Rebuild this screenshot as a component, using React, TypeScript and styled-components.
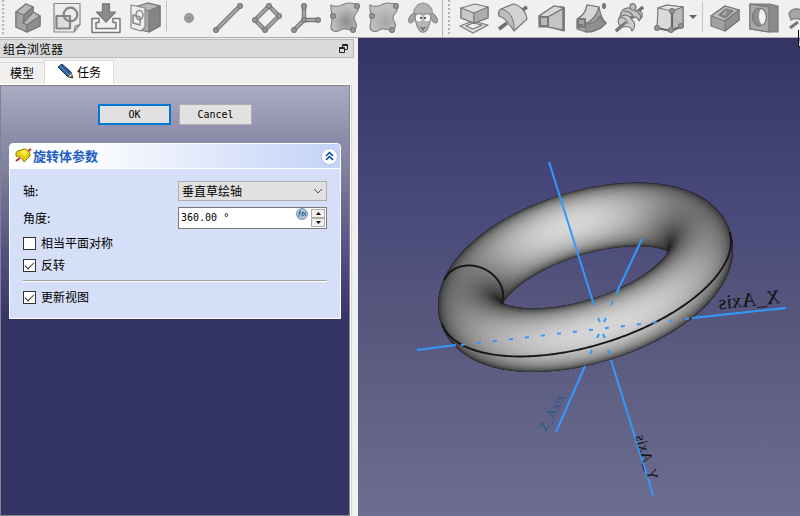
import React, { useState } from "react";
import styled, { createGlobalStyle } from "styled-components";

const cjk = '"Noto Sans CJK SC", sans-serif';
const mono = '"DejaVu Sans Mono", "Noto Sans CJK SC", monospace';

const GlobalStyle = createGlobalStyle`
  *, *::before, *::after { box-sizing: border-box; }
  body { margin: 0; background: #f0f0f0; }
`;

const Window = styled.div`
  display: flex;
  flex-direction: column;
  min-height: 100vh;
  overflow: hidden;
  background: #f0f0f0;
  color: #000;
  font: 12px/16px ${cjk};
`;

const ToolArea = styled.header`
  display: flex;
  flex: none;
  height: 38px;
  overflow: hidden;
  border-bottom: 1px solid #adadad;
`;

const ToolBar = styled.div<{ $grow?: boolean }>`
  display: flex;
  align-items: flex-start;
  flex: ${(p) => (p.$grow ? "1 1 0" : "none")};
  min-width: 0;
  height: 37px;
  padding-left: ${(p) => (p.$grow ? 3 : 0)}px;
  overflow: hidden;
  border-right: ${(p) => (p.$grow ? "none" : "1px solid #b4b4b4")};
`;

const Grip = styled.span`
  flex: none;
  width: 2px;
  height: 34px;
  margin: 0 4px 0 2px;
  background: repeating-linear-gradient(#b4b4b4 0 2px, transparent 2px 4px);
`;

const Divider = styled.span<{ $gap?: number }>`
  flex: none;
  width: 1px;
  height: 31px;
  margin: 1px 2px 0 ${(p) => p.$gap ?? 2}px;
  background: #c4c4c4;
`;

const ToolButton = styled.button`
  flex: none;
  width: 39px;
  height: 34px;
  padding: 2px 4px 0 5px;
  border: 0;
  background: none;
  svg { display: block; width: 30px; height: 30px; overflow: visible; }
`;

const MenuArrow = styled.button`
  flex: none;
  width: 10px;
  height: 34px;
  padding: 0 1px;
  border: 0;
  background: none;
  svg { display: block; }
`;

const Main = styled.main`
  display: flex;
  flex: 1;
  min-height: 0;
`;

const Dock = styled.aside`
  display: flex;
  flex-direction: column;
  flex: none;
  width: 358px;
  padding: 1px 4px 0 0;
`;

const DockTitle = styled.div`
  display: flex;
  align-items: center;
  justify-content: space-between;
  height: 19px;
  padding: 0 5px 0 3px;
  border: 1px solid #b9b9b9;
  border-left: 0;
  background: #dadada;
`;

const FloatButton = styled.button`
  display: flex;
  padding: 0;
  border: 0;
  background: none;
`;

const Tabs = styled.div`
  display: flex;
  align-items: flex-end;
  height: 27px;
  border-bottom: 1px solid #fff;
`;

const Tab = styled.button<{ $active?: boolean }>`
  display: flex;
  align-items: center;
  gap: 3px;
  height: ${(p) => (p.$active ? 24 : 22)}px;
  padding: 0 ${(p) => (p.$active ? 12 : 10)}px 2px;
  border: 1px solid #d9d9d9;
  border-bottom: 0;
  border-left-width: ${(p) => (p.$active ? 1 : 0)}px;
  border-right-width: ${(p) => (p.$active ? 1 : 0)}px;
  background: ${(p) => (p.$active ? "#fff" : "#f0f0f0")};
  font: 12px/16px ${cjk};
  color: #000;
`;

const TaskPanel = styled.section`
  display: flex;
  flex-direction: column;
  flex: 1;
  gap: 18px;
  margin-right: 4px;
  padding: 18px 8px 0;
  border: 1px solid #82828c;
  box-shadow: 1px 0 #fff, 2px 0 #d5d5d5;
  background: linear-gradient(#aaaac2 0, #8e8eab 50px, #7c7c9e 90px, #505081 170px, #343465 235px);
`;

const Actions = styled.div`
  display: flex;
  justify-content: center;
  gap: 8px;
`;

const PushButton = styled.button<{ $primary?: boolean }>`
  width: 73px;
  height: 21px;
  padding: 0;
  border: ${(p) => (p.$primary ? "2px solid #0078d7" : "1px solid #adadad")};
  background: #e1e1e1;
  font: 10px/16px ${mono};
  color: #000;
`;

const Group = styled.section`
  border: 1px solid #fff;
  border-radius: 4px 4px 0 0;
  overflow: hidden;
  background: #d5dff7;
`;

const GroupHeader = styled.header`
  display: flex;
  align-items: center;
  gap: 1px;
  height: 25px;
  padding: 0 2px 0 5px;
  border-bottom: 1px solid #fff;
  background: linear-gradient(90deg, #fff 0, #fbfcff 25%, #c6d4f7 95%);
`;

const GroupTitle = styled.h2`
  flex: 1;
  margin: 0;
  font: bold 13px/16px ${cjk};
  color: #215dc6;
`;

const Collapse = styled.button`
  display: flex;
  align-items: center;
  justify-content: center;
  width: 17px;
  height: 17px;
  padding: 0;
  border: 1px solid #b3bfe0;
  border-radius: 50%;
  background: #fff;
`;

const Form = styled.form`
  display: flex;
  flex-direction: column;
  padding: 6px 13px 14px;
`;

const Field = styled.div<{ $height: number }>`
  display: grid;
  grid-template-columns: 155px minmax(0, 1fr);
  grid-template-rows: 100%;
  align-items: center;
  height: ${(p) => p.$height}px;
  margin-top: 6px;
`;

const Control = styled.div`
  position: relative;
  display: flex;
  height: 100%;
`;

const Select = styled.select`
  appearance: none;
  width: 100%;
  padding: 0 20px 0 3px;
  border: 1px solid #adadad;
  border-radius: 0;
  background: #e1e1e1;
  font: 12px/16px ${cjk};
  color: #000;
`;

const SelectArrow = styled.svg`
  position: absolute;
  top: 7px;
  right: 4px;
  pointer-events: none;
`;

const SpinBox = styled.div`
  display: flex;
  height: 100%;
  border: 1px solid #7a7a7a;
  background: #fff;
`;

const SpinInput = styled.input`
  flex: 1;
  min-width: 0;
  padding: 0 2px;
  border: 0;
  outline: 0;
  background: none;
  font: 10px/16px ${mono};
  color: #000;
`;

const Steps = styled.div`
  display: flex;
  flex-direction: column;
  flex: none;
  width: 14px;
  margin: 1px 1px 1px 3px;
`;

const Step = styled.button`
  display: flex;
  align-items: center;
  justify-content: center;
  flex: 1;
  padding: 0;
  border: 1px solid #adadad;
  background: #f0f0f0;
`;

const Checks = styled.div`
  display: flex;
  flex-direction: column;
  gap: 8px;
  margin-top: 7px;
`;

const Check = styled.label`
  display: flex;
  align-items: center;
  gap: 5px;
  height: 14px;
`;

const CheckInput = styled.input`
  appearance: none;
  width: 13px;
  height: 13px;
  margin: 0;
  border: 1px solid #333;
  background: #fff;
  &:checked::before {
    content: "";
    display: block;
    width: 9px;
    height: 5px;
    margin: 2px 0 0 1px;
    border: solid #333;
    border-width: 0 0 1px 1px;
    transform: rotate(-45deg);
  }
`;

const Rule = styled.hr`
  width: 100%;
  height: 2px;
  margin: 0;
  border: solid;
  border-width: 1px 0;
  border-color: #a0a0a0 transparent #fff;
`;

const Viewport = styled.section`
  position: relative;
  display: flex;
  flex: 1;
  min-width: 0;
  background: linear-gradient(#343465 0, #393969 8%, #48487a 34%, #56567d 58%, #626286 78%, #6d6d92 100%);
`;

const Scene = styled.svg`
  display: block;
  width: 100%;
  aspect-ratio: 442 / 478;
  align-self: flex-start;
`;

const Pointer = styled.svg`
  position: absolute;
  top: -8px;
  right: 0;
`;

/* ---------- toolbar icons ---------- */

const dark = "#787878";
const mid = "#a0a0a0";

const Icon = ({ children }: { children: React.ReactNode }) => (
  <svg viewBox="0 0 30 30" fill={mid} stroke={dark} strokeWidth="1.2" strokeLinejoin="round" aria-hidden="true">
    {children}
  </svg>
);

const Dot = ({ x, y }: { x: number; y: number }) => <circle cx={x} cy={y} r="2.4" fill="#999" />;

const Pipe = ({ d, close }: { d: string; close?: boolean }) => (
  <g fill="none" strokeLinecap={close ? "butt" : "round"}>
    <path d={d} strokeWidth="4.4" />
    <path d={d} strokeWidth="2" stroke="#a8a8a8" />
  </g>
);

const BodyIcon = () => (
  <Icon>
    <path d="M3 9 13 1l7 3v5l7 4v10l-13 6-11-5z" fill={mid} />
    <path d="M3 9 13 1l7 3-9 8z" fill="#b8b8b8" />
    <path d="m10 20 10-11 7 4-13 9z" fill="#b8b8b8" />
    <path d="m11 12 9-8v5L10 20z" fill="#8b8b8b" />
    <path d="M3 9l8 3-1 8 4 2v7L3 24z" fill="#a2a2a2" />
    <path d="m14 22 13-9v10l-13 6z" fill="#8e8e8e" />
  </Icon>
);

const SketchIcon = () => (
  <Icon>
    <path d="M2 .5h26v21L22 29H2z" fill="#ececec" stroke="#888" />
    <path d="M28 21.500 22 29l1-6z" fill="#c4c4c4" stroke="#888" />
    <g fill="none" stroke="#858585" strokeWidth="2.200">
      <path d="M4.500 13h13.500v12.500H4.500z" fill="#bbb" fillOpacity=".3" />
      <circle cx="18.500" cy="11.500" r="6.800" />
    </g>
  </Icon>
);

const ExportIcon = () => (
  <Icon>
    <path d="M1 15.500h7v4H5v6h20v-6h-3v-4h7v14H1z" fill="#f6f6f6" strokeWidth="1.500" />
    <path d="M11.500.8h7V9h6L15 19 5.500 9h6z" fill="#8c8c8c" />
  </Icon>
);

const MapIcon = () => (
  <Icon>
    <path d="m5 4 13-4 12 3v20l-11 6-14-3z" fill="#a8a8a8" />
    <path d="m5 4 13-4 12 3-11 5z" fill="#b8b8b8" />
    <path d="m19 8 11-5v20l-11 6z" fill="#858585" />
    <path d="m1 2 14 3v19l-4 4-10-3z" fill="#eee" stroke="#888" />
    <path d="m3 12 7 2v8l-7-2z" fill="none" stroke="#888" strokeWidth="1.500" />
    <ellipse cx="9.500" cy="12" rx="3.500" ry="4.500" fill="none" stroke="#888" strokeWidth="1.500" />
  </Icon>
);

const PointIcon = () => (
  <Icon>
    <circle cx="15" cy="15" r="4.300" fill="#a0a0a0" stroke="#8f8f8f" strokeWidth="1.200" />
    <circle cx="15" cy="15" r="2" fill="#929292" stroke="none" />
  </Icon>
);

const LineIcon = () => (
  <Icon>
    <Pipe d="M3 27 27 3" />
    <Dot x={3} y={27} />
    <Dot x={27} y={3} />
  </Icon>
);

const PlaneIcon = () => (
  <Icon>
    <Pipe d="M17 3 27 13 13 27 3 17z" close />
    <Dot x={17} y={3} />
    <Dot x={27} y={13} />
    <Dot x={13} y={27} />
    <Dot x={3} y={17} />
  </Icon>
);

const AxesIcon = () => (
  <Icon>
    <Pipe d="M13 3v14h14M13 17 3 27" />
    <Dot x={13} y={3} />
    <Dot x={13} y={17} />
    <Dot x={27} y={17} />
    <Dot x={3} y={27} />
  </Icon>
);

const BinderIcon = ({ soft }: { soft?: boolean }) => {
  const id = soft ? "surf-soft" : "surf-solid";
  return (
    <Icon>
      <radialGradient id={id} cx=".55" cy=".65">
        <stop offset="0" stopColor={soft ? "#a6a6a6" : "#8c8c8c"} />
        <stop offset="1" stopColor="#c0c0c0" />
      </radialGradient>
      <path
        d="M1 2c4 2 7 2 11 0 5-3 9-2 14-1 4 1 3 5 1 8-3 4-4 6-2 9 3 5 1 9-3 9-4 0-7-3-12 0-4 3-9 1-9-3 1-4 1-7 1-11S0 5 1 2z"
        fill={`url(#${id})`}
        stroke="#858585"
      />
      <Dot x={27} y={3} />
      <Dot x={3} y={13} />
      <Dot x={23} y={27} />
    </Icon>
  );
};

const SheepIcon = () => (
  <Icon>
    <path d="M7 9C4 11-1 16 1 19c2 3 6-2 7-6M23 9c3 2 8 7 6 10-2 3-6-2-7-6" fill="#a5a5a5" stroke="#8a8a8a" />
    <path d="M7 12c0 8 2 11 4 15 2 3 6 3 8 0 2-4 4-7 4-15L19 6h-8z" fill="#b5b5b5" stroke="#8a8a8a" />
    <path d="M6 10C5 5 9 4 9 3c1-3 5-2 6-3 2 1 5 0 6 3 1 1 4 2 3 7-3 2-5-1-8 1-4-2-7 1-10-1z" fill="#b4b4b4" stroke="#999" />
    <g fill="#fff" stroke="none">
      <circle cx="11" cy="15" r="3.200" />
      <circle cx="19" cy="15" r="3.200" />
    </g>
    <g fill="#555" stroke="none">
      <circle cx="13" cy="15" r="1.200" />
      <circle cx="17" cy="15" r="1.200" />
    </g>
    <path d="m12.500 24 2.500 2 2.500-2M15 26v2" fill="none" stroke="#666" />
  </Icon>
);

const PadIcon = () => (
  <Icon>
    <path d="m1 23 13-5 15 4-15 8zm6 0 7 3 9-4-9-2z" fill="#dcdcdc" fillRule="evenodd" />
    <path d="m2 5 14-4 13 3v11l-14 5-13-5z" fill="#e0e0e0" />
    <path d="m2 5 13 5v10L2 15z" fill="#c8c8c8" />
    <path d="m15 10 14-6v11l-14 5z" fill="#adadad" />
  </Icon>
);

const RevolveIcon = () => (
  <Icon>
    <path d="m1 26 8-6M23 8l6-4" stroke="#707070" strokeWidth="3.500" />
    <path d="M1 13C0 9 1 7 3 6l12-5c7 1 13 7 14 15L16 28c-2-3-3-5-5-7-3-4-6-7-10-8z" fill="#d2d2d2" />
    <path d="M3 6c8 1 14 9 13 22-2-3-3-5-5-7-3-4-6-7-10-8 0-4 0-6 2-7z" fill="#bdbdbd" strokeWidth="1" />
  </Icon>
);

const LoftIcon = () => (
  <Icon>
    <path d="M2 13 17 3l10 1v24L11 24H2z" fill="#a8a8a8" />
    <path d="M2 13 17 3l10 2-16 9z" fill="#d8d8d8" />
    <path d="m11 14 16-9v22l-16-3z" fill="#c4c4c4" />
    <path d="M26.500 4v24" strokeWidth="2.500" />
    <path d="M3 14h8v9H3z" fill="#b8b8b8" strokeWidth="2" />
  </Icon>
);

const SweepIcon = () => (
  <Icon>
    <path d="M1 16C6 13 10 9 11 2l12 2c1 6 3 12 7 16-6 7-14 9-20 9l-9-3z" fill="#a2a2a2" />
    <path d="M3 15C8 12 10 8 11 2l12 2c-2 8-7 14-14 17z" fill="#d6d6d6" />
    <path d="m9 21c7 0 12-3 15-8 1 3 3 5 6 7-6 7-14 9-20 9z" fill="#8f8f8f" />
    <path d="M2 16h7v8H2zM1 22h6" fill="#a3a3a3" strokeWidth="2.200" />
    <ellipse cx="28" cy="3" rx="1.500" ry="2.500" fill="#777" />
  </Icon>
);

const HelixIcon = () => (
  <Icon>
    <path d="M1 28 28 4" strokeWidth="3.500" stroke="#6e6e6e" />
    <path d="M15 2c5-4 7 2 5 5 8 0 9 6 5 9 0-4-4-6-9-4z" fill="#bcbcbc" />
    <path d="M5 14c1-9 9-11 12-7 7 1 11 6 7 11-1-5-8-5-10-3-4-2-7-2-9-1z" fill="#c2c2c2" />
    <path d="M4 15c4-5 11-3 13 2 3 2 4 7 0 11-1-5-5-5-9-4-4-1-6-5-4-9z" fill="#cdcdcd" />
    <path d="M4 15c5-1 8 1 9 6M9 8c6 0 9 3 10 8" fill="none" />
    <path d="m1 28 10-9" strokeWidth="2.500" stroke="#777" />
  </Icon>
);

const PrimitiveIcon = () => (
  <Icon>
    <path d="m4 5 9-3 16 2v18l-12 6-14-3z" fill="#dadada" />
    <path d="m4 5 14 3 11-4-16-2z" fill="#e6e6e6" />
    <path d="m18 8 11-4v19l-11 5z" fill="#bababa" />
    <path d="M3 25 17 28 28 23M18 28V8" fill="none" stroke="#686868" strokeWidth="2.200" />
    <Dot x={3} y={25} />
    <Dot x={17} y={27} />
    <Dot x={27} y={23} />
    <Dot x={18} y={8} />
  </Icon>
);

const PocketIcon = () => (
  <Icon>
    <path d="M1 13 15 3l14 4v10L15 28 1 23z" fill="#a2a2a2" />
    <path d="M1 13 15 3l14 4-14 11z" fill="#bdbdbd" />
    <path d="m15 18 14-11v10L15 28z" fill="#909090" />
    <path d="m9 12 7-6 7 2-8 7z" fill="#8a8a8a" />
    <path d="m12 12 4-5v5z" fill="#b0b0b0" stroke="none" />
  </Icon>
);

const HoleIcon = () => (
  <Icon>
    <path d="M1 1h19l9 2v26h-9L1 26z" fill="#8b8b8b" />
    <path d="m1 1 19 3v25L1 26z" fill="#a8a8a8" />
    <ellipse cx="10.500" cy="14" rx="7" ry="8.800" fill="#8f8f8f" />
    <path d="M12 6c6 2 6 13 1 16-4-5-4-11-1-16z" fill="#f0f0f0" stroke="none" />
  </Icon>
);

const GrooveIcon = () => (
  <Icon>
    <path d="m2 25 8-6" strokeWidth="3" />
    <path d="M1 11C3 5 9 5 14 7l14 5-10 15c0-9-8-14-15-10z" fill="#a6a6a6" />
  </Icon>
);

type Tool = [string, () => React.ReactElement];

const startTools: Tool[] = [
  ["实体", BodyIcon],
  ["草图", SketchIcon],
  ["编辑草图", ExportIcon],
  ["映射草图", MapIcon],
];
const modelTools: Tool[] = [
  ["点", PointIcon],
  ["线", LineIcon],
  ["面", PlaneIcon],
  ["坐标系", AxesIcon],
  ["形体绑定", () => <BinderIcon />],
  ["子形体绑定", () => <BinderIcon soft />],
  ["克隆", SheepIcon],
];
const addTools: Tool[] = [
  ["凸台", PadIcon],
  ["旋转体", RevolveIcon],
  ["放样", LoftIcon],
  ["扫掠", SweepIcon],
  ["螺旋", HelixIcon],
  ["基本体", PrimitiveIcon],
];
const cutTools: Tool[] = [
  ["凹坑", PocketIcon],
  ["孔", HoleIcon],
  ["凹槽", GrooveIcon],
];

const Tools = ({ items }: { items: Tool[] }) => (
  <>
    {items.map(([name, Glyph]) => (
      <ToolButton key={name} type="button" aria-label={name}>
        <Glyph />
      </ToolButton>
    ))}
  </>
);

/* ---------- torus ---------- */

type Vec = [number, number, number];
const unit = (v: Vec): Vec => {
  const n = Math.hypot(...v);
  return [v[0] / n, v[1] / n, v[2] / n];
};
const cross = (a: Vec, b: Vec): Vec => [
  a[1] * b[2] - a[2] * b[1],
  a[2] * b[0] - a[0] * b[2],
  a[0] * b[1] - a[1] * b[0],
];

// Screen-space basis: x right, y down, z toward the viewer.
const axisY = unit([52, 166, -88]);
const axisW = unit(cross([184, -21, 61], axisY));
const axisX = cross(axisY, axisW);
const CENTER = [227.5, 239.3];
const MAJOR = 120;
const MINOR = 31;

const normalAt = (u: number, v: number): Vec =>
  [0, 1, 2].map(
    (i) => Math.cos(v) * (Math.cos(u) * axisX[i] + Math.sin(u) * axisW[i]) + Math.sin(v) * axisY[i]
  ) as Vec;

const pointAt = (u: number, v: number): Vec => {
  const n = normalAt(u, v);
  return [0, 1, 2].map(
    (i) => (CENTER[i] ?? 0) + MAJOR * (Math.cos(u) * axisX[i] + Math.sin(u) * axisW[i]) + MINOR * n[i]
  ) as Vec;
};

const TURN = Math.PI * 2;
const xy = (p: Vec) => `${p[0].toFixed(2)},${p[1].toFixed(2)}`;

const facets = (() => {
  const nu = 160;
  const nv = 80;
  const list: { z: number; points: string; fill: string }[] = [];
  for (let i = 0; i < nu; i++) {
    for (let j = 0; j < nv; j++) {
      const u0 = (i / nu) * TURN;
      const u1 = ((i + 1) / nu) * TURN;
      const v0 = (j / nv) * TURN;
      const v1 = ((j + 1) / nv) * TURN;
      const facing = normalAt((u0 + u1) / 2, (v0 + v1) / 2)[2];
      if (facing < -0.03) continue;
      const g = Math.round(30 + 184 * Math.max(0, facing));
      list.push({
        z: pointAt((u0 + u1) / 2, (v0 + v1) / 2)[2],
        points: [pointAt(u0, v0), pointAt(u1, v0), pointAt(u1, v1), pointAt(u0, v1)].map(xy).join(" "),
        fill: `rgb(${g},${g},${g})`,
      });
    }
  }
  return list.sort((a, b) => a.z - b.z);
})();

const visibleCurve = (at: (t: number) => [number, number]) => {
  let d = "";
  let pen = false;
  for (let i = 0; i <= 720; i++) {
    const [u, v] = at((i / 360) * TURN);
    if (normalAt(u, v)[2] > 0) {
      d += `${pen ? "L" : "M"}${xy(pointAt(u, v))}`;
      pen = true;
    } else pen = false;
  }
  return d;
};

const equator = visibleCurve((t) => [t, 0]);
const section = visibleCurve((t) => [Math.PI, t]);

const Model = () => (
  <Scene viewBox="0 0 442 478" role="img" aria-label="Torus">
    <g strokeWidth="1.6" strokeLinejoin="round">
      {facets.map((f, i) => (
        <polygon key={i} points={f.points} fill={f.fill} stroke={f.fill} />
      ))}
    </g>
    <g fill="none" stroke="#161616" strokeWidth="1.900">
      <path d={equator} />
      <path d={section} />
    </g>
    <g fill="none" stroke="#3399ff" strokeWidth="2">
      <path d="M59 312 98 307M334 280 428 270" />
      <path d="M191 124 236 267M253 322 295 457" />
      <path d="M284 201 258 256M227 328 198 394" />
      <path d="M103 307 335 280" strokeDasharray="4 12.100" />
      <path d="M240 280l2 4M245 296l2 4M250 312l2 4" />
      <path d="M255 263l-2 4M248 280l-2 4M241 296l-2 4M234 312l-2 4" />
    </g>
    <g fontFamily='"Liberation Serif", serif'>
      <text transform="translate(423 265) rotate(-6) scale(-1 1)" fontSize="20" fill="#111">X_Axis</text>
      <text transform="translate(188 394) rotate(-62)" fontSize="13" fill="#255888">Z_Axis</text>
      <text transform="translate(291 443) rotate(-107) scale(1 -1)" fontSize="15" fill="#111">Y_Axis</text>
    </g>
  </Scene>
);

/* ---------- page ---------- */

const CheckRow = ({ text, on }: { text: string; on?: boolean }) => (
  <Check>
    <CheckInput type="checkbox" defaultChecked={on} />
    {text}
  </Check>
);

export default function App() {
  const [angle, setAngle] = useState("360.00 °");
  const bump = (by: number) => setAngle((a) => `${(parseFloat(a) + by).toFixed(2)} °`);

  return (
    <Window>
      <GlobalStyle />
      <ToolArea>
        <ToolBar>
          <Grip />
          <Tools items={startTools} />
          <Divider />
          <Tools items={modelTools} />
        </ToolBar>
        <ToolBar $grow>
          <Grip />
          <Tools items={addTools} />
          <MenuArrow type="button" aria-label="更多基本体">
            <svg width="8" height="5" aria-hidden="true">
              <path d="M0 0h8L4 4z" fill="#666" />
            </svg>
          </MenuArrow>
          <Divider $gap={4} />
          <Tools items={cutTools} />
        </ToolBar>
      </ToolArea>

      <Main>
        <Dock>
          <DockTitle>
            组合浏览器
            <FloatButton type="button" aria-label="浮动">
              <svg width="9" height="9" fill="none" stroke="#222" aria-hidden="true">
                <path d="M3.500 3V.5h5v5H6M3 1.500h5M.5 3.500h5v5h-5zM1 4.500h5" />
              </svg>
            </FloatButton>
          </DockTitle>
          <Tabs role="tablist">
            <Tab type="button" role="tab">模型</Tab>
            <Tab type="button" role="tab" $active aria-selected="true">
              <svg width="17" height="17" viewBox="0 0 17 17" aria-hidden="true">
                <path d="m1 4 4-3 9 8-3 5z" fill="#2d5f96" stroke="#173a63" />
                <path d="m3 3 9 9" stroke="#5f8fc0" />
                <path d="m14 9 2 6-5-1z" fill="#d8cbb4" stroke="#555" />
                <path d="m14 13 2 2-3-.5z" fill="#222" />
              </svg>
              任务
            </Tab>
          </Tabs>
          <TaskPanel>
            <Actions>
              <PushButton type="button" $primary>OK</PushButton>
              <PushButton type="button">Cancel</PushButton>
            </Actions>
            <Group>
              <GroupHeader>
                <svg width="17" height="16" viewBox="0 0 17 16" aria-hidden="true">
                  <path d="m1 13 4-3M12 4l4-3" stroke="#d22" strokeWidth="2" />
                  <path d="M1 6c0-2 1-3 2-3l6-2c4 0 6 3 6 7l-6 6c-1-3-3-5-8-6z" fill="#e6cd10" stroke="#8d7b00" />
                  <path d="m4 4 5-2c2 0 3 1 4 3L9 8C8 6 6 5 4 4z" fill="#f8e94a" />
                </svg>
                <GroupTitle>旋转体参数</GroupTitle>
                <Collapse type="button" aria-label="折叠">
                  <svg width="9" height="10" fill="none" stroke="#003fae" strokeWidth="1.500" aria-hidden="true">
                    <path d="m1 5 3.500-3.500L8 5M1 9l3.500-3.500L8 9" />
                  </svg>
                </Collapse>
              </GroupHeader>
              <Form>
                <Field $height={20}>
                  <label htmlFor="axis">轴:</label>
                  <Control>
                    <Select id="axis" defaultValue="v">
                      <option value="v">垂直草绘轴</option>
                      <option value="h">水平草绘轴</option>
                    </Select>
                    <SelectArrow width="10" height="7" fill="none" stroke="#555" aria-hidden="true">
                      <path d="m1 1 4 4 4-4" />
                    </SelectArrow>
                  </Control>
                </Field>
                <Field $height={22}>
                  <label htmlFor="angle">角度:</label>
                  <SpinBox>
                    <SpinInput id="angle" value={angle} onChange={(e) => setAngle(e.target.value)} />
                    <svg width="12" height="12" viewBox="0 0 12 12" aria-hidden="true">
                      <circle cx="6" cy="6" r="5.500" fill="#a9bfd8" stroke="#7d9cc0" />
                      <path d="M5 2.500c-2 0-1 6-3 6M2.500 5H5M6.500 4l-.5 4M7 4l3 4M10 4 7 8" fill="none" stroke="#34618f" />
                    </svg>
                    <Steps>
                      <Step type="button" aria-label="增加" onClick={() => bump(1)}>
                        <svg width="5" height="3" aria-hidden="true"><path d="M0 3h5L2.500 0z" /></svg>
                      </Step>
                      <Step type="button" aria-label="减少" onClick={() => bump(-1)}>
                        <svg width="5" height="3" aria-hidden="true"><path d="M0 0h5L2.500 3z" /></svg>
                      </Step>
                    </Steps>
                  </SpinBox>
                </Field>
                <Checks>
                  <CheckRow text="相当平面对称" />
                  <CheckRow text="反转" on />
                  <Rule />
                  <CheckRow text="更新视图" on />
                </Checks>
              </Form>
            </Group>
          </TaskPanel>
        </Dock>
        <Viewport>
          <Model />
          <Pointer width="2" height="17" aria-hidden="true">
            <path d="M.5 0v16.500H2" fill="#fff" stroke="#000" />
          </Pointer>
        </Viewport>
      </Main>
    </Window>
  );
}
